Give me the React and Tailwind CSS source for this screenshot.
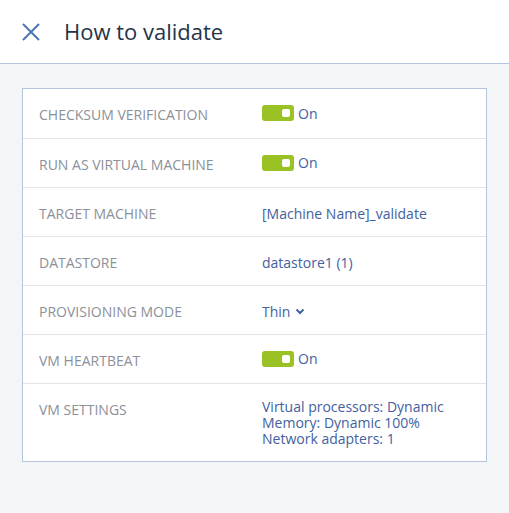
import React from "react";

function Toggle() {
    return (
        <span className="inline-flex items-center">
            <span className="relative w-[32px] h-[16px] rounded-[3px] bg-[#9bc225] inline-block">
                <span className="absolute right-[4px] top-[4px] w-[8px] h-[8px] rounded-[2px] bg-white" />
            </span>
            <span className="ml-[4px] text-[#42619e]">On</span>
        </span>
    );
}

const rows = [
    { label: "CHECKSUM VERIFICATION", value: <Toggle /> },
    { label: "RUN AS VIRTUAL MACHINE", value: <Toggle /> },
    { label: "TARGET MACHINE", value: <span className="text-[#42619e]">[Machine Name]_validate</span> },
    { label: "DATASTORE", value: <span className="text-[#42619e]">datastore1 (1)</span> },
    {
        label: "PROVISIONING MODE",
        value: (
            <span className="inline-flex items-center text-[#42619e]">
                Thin
                <svg className="ml-[5px]" width="10" height="7" viewBox="0 0 10 7" fill="none">
                    <path d="M1.5 1.5 L5 5 L8.5 1.5" stroke="#42619e" strokeWidth="2" />
                </svg>
            </span>
        ),
    },
    { label: "VM HEARTBEAT", value: <Toggle /> },
    {
        label: "VM SETTINGS",
        value: (
            <div className="text-[#42619e] leading-[16px]">
                <div>Virtual processors: Dynamic</div>
                <div>Memory: Dynamic 100%</div>
                <div>Network adapters: 1</div>
            </div>
        ),
        top: true,
    },
];

export default function App() {
    return (
        <div className="w-[509px] h-[513px] bg-[#f4f5f7] font-['Open_Sans',sans-serif] text-[14px]">
            <div className="h-[64px] bg-white border-b border-[#b3c4dd] flex items-center">
                <svg className="ml-[22px]" width="18" height="18" viewBox="0 0 18 18" fill="none">
                    <path d="M1 1 L17 17 M17 1 L1 17" stroke="#4a76b4" strokeWidth="2" />
                </svg>
                <h1 className="ml-[24px] text-[22px] text-[#243448]">How to validate</h1>
            </div>
            <div className="px-[22px] pt-[24px]">
                <div className="bg-white border border-[#b3c4dd]">
                    {rows.map((row, i) => (
                        <div
                            key={i}
                            className={`flex ${row.top ? "items-start pt-[15px] pb-[14px]" : "items-center pt-[2px]"} ${i === 0 ? "h-[50px]" : row.top ? "" : "h-[49px]"} ${i < rows.length - 1 ? "border-b border-[#e1e4e8]" : ""}`}
                        >
                            <div className="w-[239px] pl-[16px] text-[14px] text-[#8c9099]">{row.label}</div>
                            <div>{row.value}</div>
                        </div>
                    ))}
                </div>
            </div>
        </div>
    );
}
